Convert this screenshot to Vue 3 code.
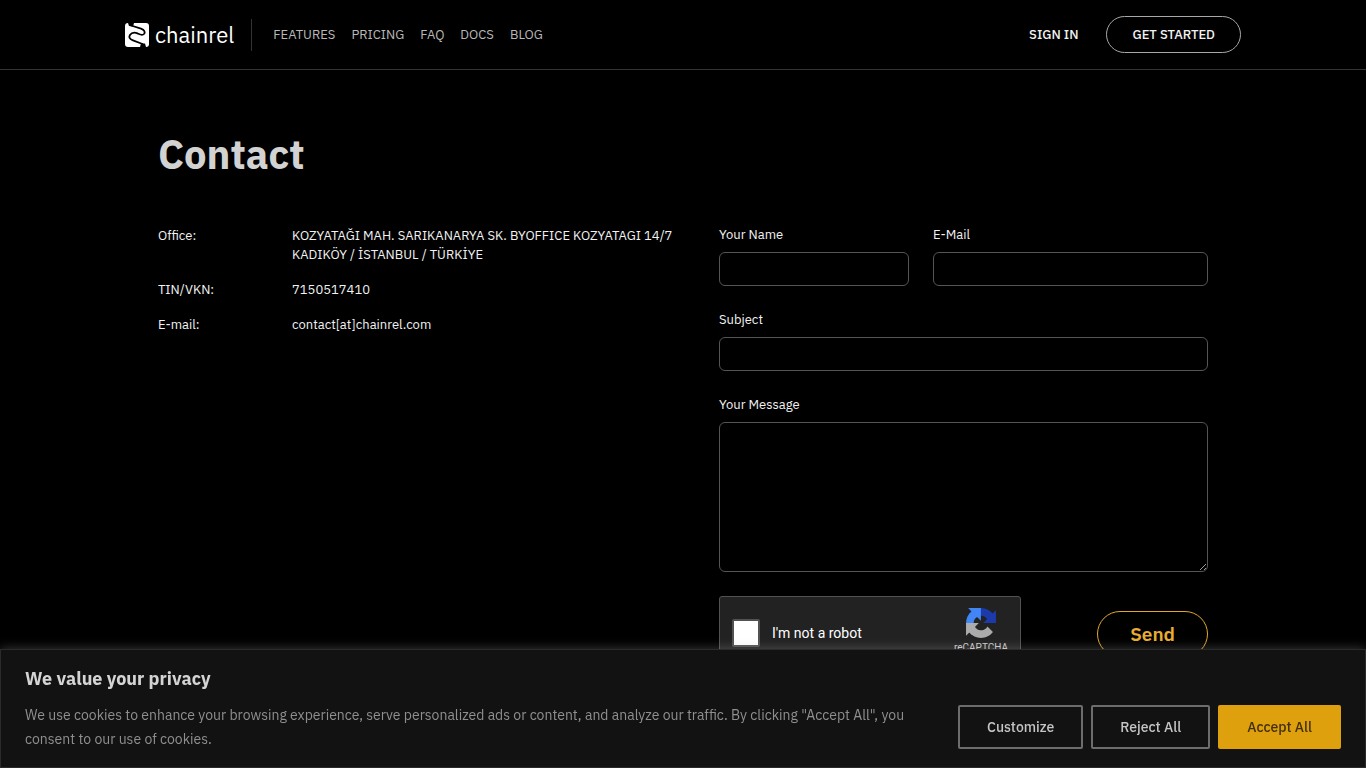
<script setup>
import { ref } from 'vue'

const links = ['Features', 'Pricing', 'FAQ', 'Docs', 'Blog']
const name = ref('')
const email = ref('')
const subject = ref('')
const message = ref('')
const human = ref(false)
</script>

<template>
  <div class="page">
    <header class="header">
      <div class="bar">
        <a class="brand" href="#">
          <svg width="24" height="24" viewBox="0 0 24 24" aria-hidden="true">
            <rect width="24" height="24" rx="3" fill="#fff" />
            <path d="M3 0 L9 0 L8 3.500 L4 3 Z M15 24 L21 24 L20 20.500 L16 20.500 Z" fill="#000" />
            <path d="M6 2.500 L16 5.600 C19.500 6.800 20.500 9.200 19 11 C17.200 13 14.500 11.300 12.500 10.400 C9.500 9.200 6.500 9.800 4.900 12 C3.600 14.400 4.800 16.200 8 17.400 L17.500 21" fill="none" stroke="#000" stroke-width="1.800" stroke-linecap="round" />
          </svg>
          <span class="wordmark">chainrel</span>
        </a>
        <nav class="nav">
          <a v-for="link in links" :key="link" href="#">{{ link }}</a>
        </nav>
        <div class="account">
          <a class="signin" href="#">Sign in</a>
          <a class="start" href="#">Get started</a>
        </div>
      </div>
    </header>

    <main class="main">
      <h1>Contact</h1>
      <div class="columns">
        <dl class="details">
          <dt>Office:</dt>
          <dd>KOZYATAĞI MAH. SARIKANARYA SK. BYOFFICE KOZYATAGI 14/7<br />KADIKÖY / İSTANBUL / TÜRKİYE</dd>
          <dt>TIN/VKN:</dt>
          <dd>7150517410</dd>
          <dt>E-mail:</dt>
          <dd>contact[at]chainrel.com</dd>
        </dl>

        <form class="form" @submit.prevent>
          <div class="pair">
            <div class="field">
              <label for="name">Your Name</label>
              <input id="name" v-model="name" type="text" />
            </div>
            <div class="field">
              <label for="email">E-Mail</label>
              <input id="email" v-model="email" type="email" />
            </div>
          </div>
          <div class="field">
            <label for="subject">Subject</label>
            <input id="subject" v-model="subject" type="text" />
          </div>
          <div class="field">
            <label for="message">Your Message</label>
            <textarea id="message" v-model="message"></textarea>
          </div>
          <div class="actions">
            <div class="captcha">
              <input id="robot" v-model="human" type="checkbox" />
              <label for="robot">I'm not a robot</label>
              <div class="mark">
                <svg width="30" height="30" viewBox="0 0 64 64" aria-hidden="true">
                  <path fill="#1c3aa9" d="M64 31.955l-.033-1.370V4.687l-7.160 7.160C50.948 4.674 42.033.093 32.050.093c-10.400 0-19.622 4.960-25.458 12.640l11.736 11.860a15.550 15.550 0 0 1 4.754-5.334c2.050-1.600 4.952-2.906 8.968-2.906.485 0 .860.057 1.135.163 4.976.393 9.288 3.140 11.828 7.124l-8.307 8.307L64 31.953" />
                  <path fill="#4285f4" d="M31.862.094l-1.370.033H4.594l7.160 7.160C4.580 13.147 0 22.060 0 32.046c0 10.400 4.960 19.622 12.640 25.458L24.500 45.768a15.550 15.550 0 0 1-5.334-4.754c-1.600-2.050-2.906-4.952-2.906-8.968 0-.485.057-.860.163-1.135.393-4.976 3.140-9.288 7.124-11.828l8.307 8.307L31.860.095" />
                  <path fill="#ababab" d="M.001 32.045l.033 1.370v25.898l7.160-7.160c5.860 7.173 14.774 11.754 24.760 11.754 10.400 0 19.622-4.960 25.458-12.640l-11.736-11.860a15.550 15.550 0 0 1-4.754 5.334c-2.050 1.600-4.952 2.906-8.968 2.906-.485 0-.860-.057-1.135-.163-4.976-.393-9.288-3.140-11.828-7.124l8.307-8.307c-10.522.040-22.400.066-27.295-.005" />
                </svg>
                <span>reCAPTCHA</span>
              </div>
            </div>
            <button class="send" type="submit">Send</button>
          </div>
        </form>
      </div>
    </main>

    <section class="consent" aria-labelledby="consent-title">
      <h2 id="consent-title">We value your privacy</h2>
      <div class="consent-row">
        <p>We use cookies to enhance your browsing experience, serve personalized ads or content, and analyze our traffic. By clicking "Accept All", you consent to our use of cookies.</p>
        <div class="choices">
          <button type="button">Customize</button>
          <button type="button">Reject All</button>
          <button type="button" class="accept">Accept All</button>
        </div>
      </div>
    </section>
  </div>
</template>

<style>
body {
  margin: 0;
  background: #000;
}
</style>

<style scoped>
.page {
  box-sizing: border-box;
  min-height: 100vh;
  background: #000;
  color: #f2f2f2;
  font-family: "IBM Plex Sans", Roboto, sans-serif;
  font-size: 13px;
  line-height: 19px;
}

.page *,
.page *::before {
  box-sizing: border-box;
}

a {
  color: inherit;
  text-decoration: none;
}

button,
input,
textarea {
  font-family: inherit;
}

.header {
  border-bottom: 1px solid #333;
}

.bar {
  display: flex;
  align-items: center;
  max-width: 1116px;
  height: 69px;
  margin: 0 auto;
}

.brand {
  display: flex;
  align-items: center;
  gap: 6px;
  height: 32px;
  padding-right: 17px;
  border-right: 1px solid #333;
  color: #fff;
}

.wordmark {
  font-size: 22px;
  line-height: 24px;
}

.nav {
  display: flex;
  gap: 16px;
  margin-left: 21px;
  color: #b8b8b8;
  text-transform: uppercase;
}

.account {
  display: flex;
  align-items: center;
  gap: 28px;
  margin-left: auto;
  font-weight: 500;
  text-transform: uppercase;
}

.start {
  padding: 8px 25px;
  border: 1px solid #a8a8a8;
  border-radius: 19px;
}

.main {
  max-width: 1050px;
  margin: 0 auto;
  padding-top: 56px;
}

h1 {
  margin: 0 0 43px;
  color: #d2d2d2;
  font-size: 40px;
  font-weight: 700;
  line-height: 56px;
}

.columns {
  display: grid;
  grid-template-columns: 561fr 489fr;
}

.details {
  display: grid;
  grid-template-columns: 134px 1fr;
  align-content: start;
  row-gap: 16px;
  margin: 0;
  padding-top: 1px;
}

dd {
  margin: 0;
}

.form {
  display: grid;
  gap: 24px;
}

.pair {
  display: grid;
  grid-template-columns: 190fr 275fr;
  gap: 24px;
}

.field {
  display: flex;
  flex-direction: column;
  gap: 7px;
  min-width: 0;
}

.field label {
  line-height: 20px;
}

.field input,
.field textarea {
  width: 100%;
  border: 1px solid #555;
  border-radius: 6px;
  background: transparent;
  color: inherit;
  font-size: 13px;
}

.field input {
  height: 34px;
  padding: 4px 12px;
}

.field textarea {
  display: block;
  height: 150px;
  padding: 8px 12px;
  resize: both;
  color-scheme: dark;
}

.actions {
  display: flex;
  align-items: flex-start;
  justify-content: space-between;
}

.captcha {
  display: flex;
  align-items: center;
  width: 302px;
  height: 74px;
  padding: 0 12px;
  border: 1px solid #525252;
  border-radius: 3px;
  background: #222;
  color: #fff;
  font-family: Roboto, sans-serif;
}

.captcha input {
  appearance: none;
  width: 28px;
  height: 28px;
  margin: 0 12px 0 0;
  border: 2px solid #525252;
  border-radius: 2px;
  background: #fff;
}

.captcha input:checked {
  background: #4285f4;
}

.captcha label {
  font-size: 14px;
  line-height: 20px;
}

.mark {
  display: flex;
  flex-direction: column;
  align-items: center;
  align-self: flex-start;
  gap: 4px;
  margin-left: auto;
  padding-top: 11px;
  color: #ccc;
  font-size: 10px;
  line-height: 12px;
}

.send {
  height: 46px;
  margin-top: 15px;
  padding: 0 32px;
  border: 1px solid #e3a82b;
  border-radius: 23px;
  background: transparent;
  color: #e9ad32;
  font-size: 19px;
  font-weight: 600;
}

.consent {
  position: fixed;
  right: 0;
  bottom: 0;
  left: 0;
  padding: 16px 24px;
  border: 1px solid #2b2b2b;
  background: #121212;
  box-shadow: 0 -1px 10px 0 rgba(172, 171, 171, 0.3);
}

h2 {
  margin: 0 0 11px;
  color: #d4d4d4;
  font-size: 18px;
  font-weight: 700;
  line-height: 26px;
}

.consent-row {
  display: flex;
  align-items: center;
  justify-content: space-between;
  gap: 32px;
}

p {
  max-width: 900px;
  margin: 0;
  color: #8f8f8f;
  font-size: 14px;
  line-height: 24px;
}

.choices {
  display: flex;
  flex: none;
  gap: 8px;
}

.choices button {
  height: 44px;
  padding: 0 27px;
  border: 2px solid #6d6d6d;
  border-radius: 2px;
  background: transparent;
  color: #c4c4c4;
  font-size: 14px;
  font-weight: 500;
}

.choices .accept {
  border-color: #dea10d;
  background: #dea10d;
  color: #44300d;
}
</style>
